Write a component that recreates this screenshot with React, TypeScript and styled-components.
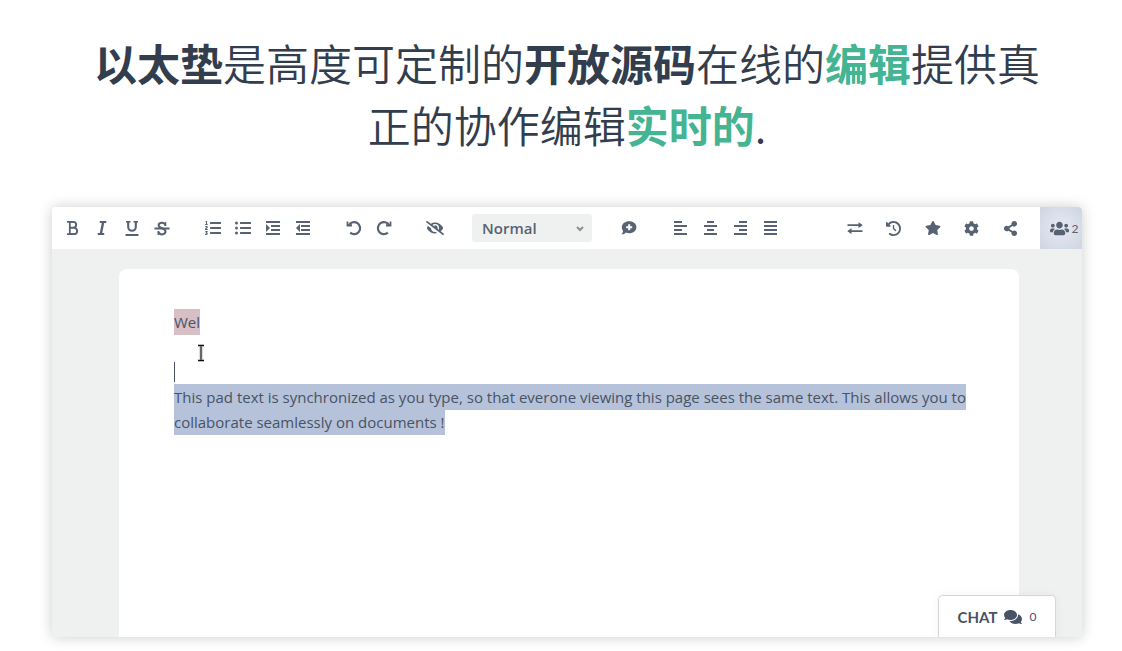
import React from "react";
import styled, { createGlobalStyle, css } from "styled-components";
import { FaListOl, FaListUl, FaEyeSlash, FaStar, FaCog, FaShareAlt, FaUsers, FaComments } from "react-icons/fa";
import { FaClockRotateLeft } from "react-icons/fa6";

const ink = "#576273";

const GlobalStyle = createGlobalStyle`
  *, *::before, *::after { box-sizing: border-box; }
  body {
    margin: 0;
    background: #fff;
    color: #2e3b4e;
    font-family: Lato, "Noto Sans CJK SC", sans-serif;
  }
`;

const Page = styled.main`
  display: flex;
  flex-direction: column;
  min-height: 100vh;
  padding: 31px 40px 14px 52px;
`;

const Headline = styled.h1`
  margin: 0 0 52px;
  padding: 0 40px;
  text-align: center;
  font-family: "Noto Sans CJK SC", sans-serif;
  font-size: 43px;
  line-height: 62px;
  font-weight: 350;
  color: #323d4d;
`;

const Strong = styled.strong<{ $accent?: boolean }>`
  font-weight: 700;
  color: ${(p) => (p.$accent ? "#44b492" : "inherit")};
`;

const Editor = styled.section`
  position: relative;
  display: flex;
  flex: 1;
  flex-direction: column;
  overflow: hidden;
  border-radius: 4px 4px 0 0;
  background: #eff1f1;
`;

const EditorFrame = styled.div`
  display: flex;
  flex: 1;
  flex-direction: column;
  border-radius: 4px 4px 0 0;
  box-shadow: 0 0 14px rgba(0, 0, 0, 0.2);
`;

const Toolbar = styled.div`
  display: flex;
  justify-content: space-between;
  height: 42px;
  background: #fff;
`;

const ToolsLeft = styled.div`
  display: flex;
  align-items: center;
  gap: 21px;
  padding-left: 5px;
`;

const ToolsRight = styled.div`
  display: flex;
  align-items: center;
`;

const Group = styled.div`
  display: flex;
`;

const bare = css`
  display: flex;
  align-items: center;
  justify-content: center;
  padding: 0;
  border: 0;
  background: none;
  color: ${ink};
  font-family: inherit;
  cursor: pointer;
`;

const ToolButton = styled.button<{ $wide?: boolean }>`
  ${bare}
  width: ${(p) => (p.$wide ? 39 : 30)}px;
  height: 42px;
`;

const UsersButton = styled.button`
  ${bare}
  gap: 3px;
  width: 42px;
  height: 42px;
  margin-left: 10px;
  padding-left: 6px;
  background: radial-gradient(circle, #e6eaf4 0%, #dadfeb 50%, #cdd5e1 100%);
  font-size: 12px;
`;

const SelectWrap = styled.label`
  position: relative;
  display: flex;
  width: 120px;
  height: 28px;
  margin: 0 1px;
`;

const StyleSelect = styled.select`
  width: 100%;
  padding: 0 10px;
  border: 0;
  border-radius: 3px;
  appearance: none;
  background: #eff1f1;
  color: ${ink};
  font-family: "Open Sans", sans-serif;
  font-size: 15px;
  font-weight: 600;
`;

const Chevron = styled.svg`
  position: absolute;
  top: 12px;
  right: 8px;
  pointer-events: none;
`;

const PaperArea = styled.div`
  display: flex;
  flex: 1;
  padding-left: 4px;
`;

const Paper = styled.article`
  position: relative;
  flex: 1;
  max-width: 900px;
  margin: 20px auto 0;
  padding: 40px 54px 0 55px;
  border-radius: 8px 8px 0 0;
  background: #fff;
`;

const Line = styled.div`
  display: flex;
  align-items: flex-start;
  height: 25px;
  line-height: 26px;
  font-family: "Open Sans", sans-serif;
  font-size: 15px;
  color: #485365;
  white-space: nowrap;
`;

const Mark = styled.span<{ $color: string }>`
  height: 26px;
  background: ${(p) => p.$color};
`;

const Caret = styled.span`
  width: 1px;
  height: 20px;
  margin-top: 3px;
  background: #485365;
`;

const Pointer = styled.svg`
  position: absolute;
  top: 75px;
  left: 78px;
`;

const ChatButton = styled.button`
  ${bare}
  position: absolute;
  right: 26px;
  bottom: 0;
  gap: 7px;
  width: 118px;
  height: 42px;
  border: 1px solid #d3d7da;
  border-bottom: 0;
  border-radius: 5px 5px 0 0;
  background: #fff;
  box-shadow: 0 0 10px rgba(0, 0, 0, 0.05);
  color: #485365;
  font-size: 15px;
  font-weight: 700;
`;

const Count = styled.span`
  font-size: 12px;
  font-weight: 400;
`;

const BoldIcon = () => (
  <svg width="14" height="14" viewBox="-2 0 14 14" fill="none" stroke="currentColor">
    <path d="M0 0.900H6.500M0 13.100H7M2.800 1V13" strokeWidth="1.800" />
    <path d="M2.800 0.900H6.200A2.900 2.900 0 0 1 6.200 6.800H3M6.200 6.800H7A3.150 3.150 0 0 1 7 13.100H3" strokeWidth="1.900" />
  </svg>
);

const ItalicIcon = () => (
  <svg width="10" height="14" viewBox="0 0 10 14" fill="none" stroke="currentColor">
    <path d="M2.800 1H9.300M0.700 13H7.200" strokeWidth="1.800" />
    <path d="M6.200 1L3.800 13" strokeWidth="2.400" />
  </svg>
);

const UnderlineIcon = () => (
  <svg width="14" height="16" viewBox="0 0 14 16" fill="none" stroke="currentColor">
    <path d="M1 1.800H5.500M8.500 1.800H13" strokeWidth="1.600" />
    <path d="M3.200 1.500V7A3.800 3.800 0 0 0 10.800 7V1.500" strokeWidth="2.100" />
    <path d="M0.500 15H13.500" strokeWidth="2" />
  </svg>
);

const StrikeIcon = () => (
  <svg width="16" height="15" viewBox="0 0 16 15" fill="none" stroke="currentColor">
    <path
      d="M11.500 4.500C11 2.600 9.800 1.700 8 1.700C6 1.700 4.600 2.700 4.600 4.300C4.600 5.800 5.800 6.500 8 7.300C10.500 8.200 11.500 9 11.500 10.600C11.500 12.400 10 13.400 8 13.400C6 13.400 4.800 12.400 4.300 10.500"
      strokeWidth="2"
    />
    <path d="M11.500 1V5M4.300 10V14" strokeWidth="1.400" />
    <path d="M0.500 7.500H15.500" strokeWidth="1.800" />
  </svg>
);

type Bar = [x: number, width: number];

const BarsIcon = ({ bars, size = 13, marker }: { bars: Bar[]; size?: number; marker?: string }) => (
  <svg width={size} height="14" viewBox={`0 0 ${size} 14`} fill="currentColor">
    {bars.map(([x, w], i) => (
      <rect key={i} x={x} y={i * 4} width={w} height="2" />
    ))}
    {marker && <path d={marker} />}
  </svg>
);

const UndoIcon = ({ flip }: { flip?: boolean }) => (
  <svg width="16" height="16" viewBox="0 0 16 16" fill="none" stroke="currentColor">
    <g transform={flip ? "translate(16 0) scale(-1 1)" : undefined}>
      <path d="M3 5A6 6 0 1 1 4.200 12.700" strokeWidth="2.200" />
      <path d="M0.600 1.500H2.400V4.200H6V6.600H0.600Z" fill="currentColor" stroke="none" />
    </g>
  </svg>
);

const CommentIcon = () => (
  <svg width="16" height="16" viewBox="0 0 16 16" fill="currentColor">
    <path
      fillRule="evenodd"
      d="M8.2 1.2C12.3 1.2 15.4 3.8 15.4 7.2S12.3 13.2 8.2 13.2C7 13.2 6 13 5 12.6C4 13.8 2.3 14.6.4 14.6C1.3 13.6 1.9 12.4 2 11C1.2 9.900 .8 8.600 .8 7.200C.8 3.800 4.100 1.200 8.200 1.200ZM7.200 4.200V6.200H5.200V8.200H7.200V10.200H9.200V8.200H11.200V6.200H9.200V4.200Z"
    />
  </svg>
);

const ExchangeIcon = () => (
  <svg width="16" height="14" viewBox="0 0 16 14" fill="currentColor">
    <path d="M0.500 3.200H11.500V1.600Q11.500.900 12 1.400L15.300 3.700Q15.700 4.100 15.300 4.500L12 6.800Q11.500 7.200 11.500 6.600V5H.5Z" />
    <path d="M15.500 9.200H4.500V7.600Q4.500 6.900 4 7.400L.7 9.700Q.3 10.100 .7 10.500L4 12.800Q4.500 13.200 4.500 12.600V11H15.500Z" />
  </svg>
);

const IBeam = () => (
  <Pointer width="8" height="18" viewBox="0 0 8 18" fill="none" aria-hidden="true">
    <path d="M1 1.500H7M4 2V16M1 16.500H7" stroke="#bbb" strokeWidth="3" />
    <path d="M1 1.500H7M4 2V16M1 16.500H7" stroke="#111" strokeWidth="1" />
  </Pointer>
);

interface Tool {
  label: string;
  icon: React.ReactNode;
}

const indentBars: Bar[] = [[0, 14], [5, 9], [5, 9], [0, 14]];

const groups: Tool[][] = [
  [
    { label: "Bold", icon: <BoldIcon /> },
    { label: "Italic", icon: <ItalicIcon /> },
    { label: "Underline", icon: <UnderlineIcon /> },
    { label: "Strikethrough", icon: <StrikeIcon /> },
  ],
  [
    { label: "Ordered list", icon: <FaListOl size={16} /> },
    { label: "Unordered list", icon: <FaListUl size={16} /> },
    { label: "Indent", icon: <BarsIcon size={14} bars={indentBars} marker="M0 3L4 7L0 11Z" /> },
    { label: "Outdent", icon: <BarsIcon size={14} bars={indentBars} marker="M4 3L0 7L4 11Z" /> },
  ],
  [
    { label: "Undo", icon: <UndoIcon /> },
    { label: "Redo", icon: <UndoIcon flip /> },
  ],
  [{ label: "Clear authorship colors", icon: <FaEyeSlash size={18} /> }],
];

const alignTools: Tool[] = [
  { label: "Align left", icon: <BarsIcon bars={[[0, 8], [0, 13], [0, 8], [0, 13]]} /> },
  { label: "Align center", icon: <BarsIcon bars={[[3, 7], [0, 13], [3, 7], [0, 13]]} /> },
  { label: "Align right", icon: <BarsIcon bars={[[5, 8], [0, 13], [5, 8], [0, 13]]} /> },
  { label: "Justify", icon: <BarsIcon bars={[[0, 13], [0, 13], [0, 13], [0, 13]]} /> },
];

const padTools: Tool[] = [
  { label: "Import/Export", icon: <ExchangeIcon /> },
  { label: "History", icon: <FaClockRotateLeft size={15} /> },
  { label: "Save revision", icon: <FaStar size={16} /> },
  { label: "Settings", icon: <FaCog size={15} /> },
  { label: "Share", icon: <FaShareAlt size={15} /> },
];

const ToolGroup = ({ tools, wide }: { tools: Tool[]; wide?: boolean }) => (
  <Group>
    {tools.map((tool) => (
      <ToolButton key={tool.label} type="button" aria-label={tool.label} $wide={wide}>
        {tool.icon}
      </ToolButton>
    ))}
  </Group>
);

export default function App() {
  return (
    <>
      <GlobalStyle />
      <Page>
        <Headline lang="zh-CN">
          <Strong>以太垫</Strong>是高度可定制的<Strong>开放源码</Strong>在线的
          <Strong $accent>编辑</Strong>提供真正的协作编辑<Strong $accent>实时的</Strong>.
        </Headline>
        <EditorFrame>
          <Editor>
            <Toolbar>
              <ToolsLeft>
                {groups.map((tools) => (
                  <ToolGroup key={tools[0].label} tools={tools} />
                ))}
                <SelectWrap>
                  <StyleSelect aria-label="Style" defaultValue="Normal">
                    <option>Normal</option>
                    <option>Heading 1</option>
                    <option>Heading 2</option>
                  </StyleSelect>
                  <Chevron width="8" height="6" viewBox="0 0 8 6" fill="none" stroke="#8b8f96" strokeWidth="2">
                    <path d="M1 1L4 4L7 1" />
                  </Chevron>
                </SelectWrap>
                <ToolGroup tools={[{ label: "Add comment", icon: <CommentIcon /> }]} />
                <ToolGroup tools={alignTools} />
              </ToolsLeft>
              <ToolsRight>
                <ToolGroup tools={padTools} wide />
                <UsersButton type="button" aria-label="Users">
                  <FaUsers size={19} />
                  2
                </UsersButton>
              </ToolsRight>
            </Toolbar>
            <PaperArea>
              <Paper>
                <Line>
                  <Mark $color="#d8bfc5">Wel</Mark>
                </Line>
                <Line />
                <Line>
                  <Caret />
                </Line>
                <Line>
                  <Mark $color="#b5c2da">
                    This pad text is synchronized as you type, so that everone viewing this page sees the same
                    text. This allows you to
                  </Mark>
                </Line>
                <Line>
                  <Mark $color="#b5c2da">collaborate seamlessly on documents !</Mark>
                </Line>
                <IBeam />
              </Paper>
            </PaperArea>
            <ChatButton type="button">
              CHAT <FaComments size={18} /> <Count>0</Count>
            </ChatButton>
          </Editor>
        </EditorFrame>
      </Page>
    </>
  );
}
